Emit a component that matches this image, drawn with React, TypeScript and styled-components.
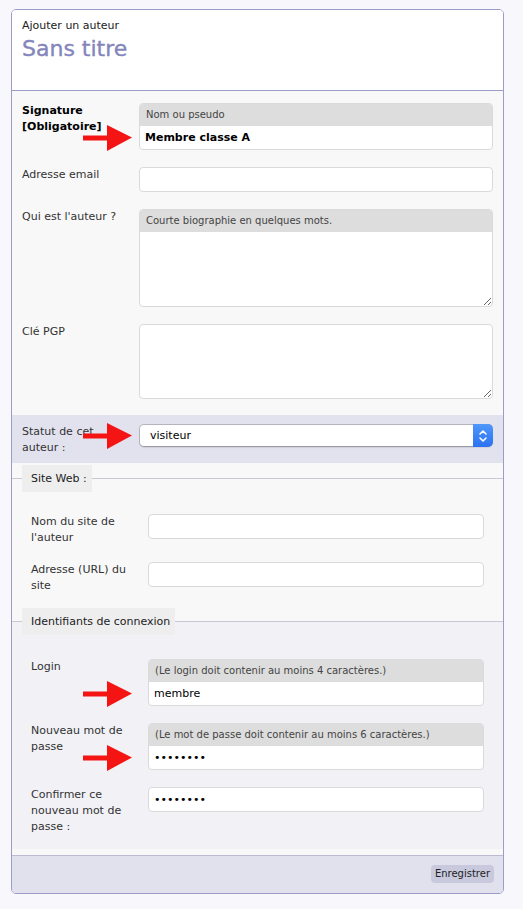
import React from 'react'
import styled, { createGlobalStyle } from 'styled-components'

const GlobalStyle = createGlobalStyle`
    html, body {
        margin: 0;
        padding: 0;
        background: #f8f8fc;
        font-family: 'DejaVu Sans', 'Liberation Sans', sans-serif;
        color: #333;
    }
    * {
        box-sizing: border-box;
    }
`

const Page = styled.div`
    padding: 9px 20px 16px 11px;
`

const Card = styled.form`
    width: 493px;
    border: 1px solid #9c9cc9;
    border-radius: 5px;
    overflow: hidden;
    background: #f8f8f8;
`

const Header = styled.div`
    height: 81px;
    background: #fff;
    border-bottom: 1px solid #9c9cc9;
    padding: 9px 10px;

    .kicker {
        font-size: 11px;
        line-height: 14px;
        color: #222;
        margin: 0;
    }

    h1 {
        font-size: 22px;
        line-height: 26px;
        font-weight: normal;
        color: #8385bb;
        margin: 3px 0 0 0;
        -webkit-text-stroke: 0.35px #8385bb;
    }
`

const Section = styled.div`
    padding: 12px 10px 16px 10px;
`

const Band = styled.div`
    background: #e2e2ee;
    padding: 9px 10px 8px 10px;
    margin-bottom: 2px;
`

const Row = styled.div<{ $last?: boolean }>`
    display: grid;
    grid-template-columns: 117px 1fr;
    align-items: start;
    margin-bottom: ${({ $last }) => ($last ? '0' : '17px')};
`

const Label = styled.label<{ $strong?: boolean }>`
    font-size: 11px;
    line-height: 16px;
    margin-bottom: -1px;
    padding-right: 8px;
    color: ${({ $strong }) => ($strong ? '#000' : '#333')};
    font-weight: ${({ $strong }) => ($strong ? 'bold' : 'normal')};
`

const Field = styled.div`
    position: relative;
    display: flex;
    flex-direction: column;
    border: 1px solid #dadada;
    border-radius: 4px;
    background: #fff;
`

const Hint = styled.div`
    height: 22px;
    background: #dddddd;
    border-radius: 3px 3px 0 0;
    font-size: 10px;
    line-height: 22px;
    padding-left: 6px;
    color: #444;
`

const Input = styled.input<{ $bold?: boolean }>`
    height: 23px;
    border: none;
    outline: none;
    background: transparent;
    border-radius: 3px;
    padding: 0 5px;
    font-family: inherit;
    font-size: 11px;
    font-weight: ${({ $bold }) => ($bold ? 'bold' : 'normal')};
    color: #000;
`

const TextArea = styled.textarea<{ $h: number }>`
    height: ${({ $h }) => $h}px;
    border: none;
    outline: none;
    background: transparent;
    border-radius: 3px;
    padding: 5px;
    font-family: inherit;
    font-size: 11px;
    resize: vertical;
`

const ValueWrap = styled.div`
    position: relative;
    display: flex;
    flex-direction: column;
`

const SelectBox = styled.div`
    position: relative;
    display: flex;
    height: 23px;
    border: 1px solid #b4b4bc;
    border-bottom-color: #9a9aa4;
    border-radius: 5px;
    background: #fff;
    box-shadow: 0 1px 1px rgba(0, 0, 0, 0.08);

    select {
        flex: 1;
        appearance: none;
        border: none;
        outline: none;
        background: transparent;
        padding: 0 10px;
        font-family: inherit;
        font-size: 11px;
        color: #000;
    }
`

const Stepper = styled.span`
    width: 20px;
    margin: -1px -1px -1px 0;
    display: flex;
    align-items: center;
    justify-content: center;
    border-radius: 0 5px 5px 0;
    background: linear-gradient(#4f97fb, #2a72f0);
`

const FieldSet = styled.fieldset<{ $tint?: string }>`
    margin: 0;
    padding: 8px 19px 15px 19px;
    border: none;
    border-top: 1px solid #c9c9d6;
    background: ${({ $tint }) => $tint || 'transparent'};

    legend {
        margin-left: -9px;
        height: 27px;
        padding: 0 5px 0 9px;
        background: #eeeeee;
        font-size: 11px;
        line-height: 27px;
        color: #222;
    }
`

const Spacer = styled.div<{ $h: number }>`
    height: ${({ $h }) => $h}px;
`

const Footer = styled.div`
    display: flex;
    justify-content: flex-end;
    align-items: center;
    height: 38px;
    padding: 0 9px 2px 0;
    margin-top: 6px;
    border-top: 1px solid #bbbbd4;
    background: #e1e1ee;
`

const SaveButton = styled.button`
    height: 18px;
    padding: 0 4px;
    border: none;
    border-radius: 4px;
    background: #c9c9de;
    font-family: inherit;
    font-size: 10px;
    color: #222;
`

const ArrowMark = styled.svg<{ $offset: number }>`
    position: absolute;
    right: calc(100% + ${({ $offset }) => $offset}px);
    top: 50%;
    transform: translateY(-50%);
    pointer-events: none;
`

const RedArrow = ({ offset }: { offset: number }) => (
    <ArrowMark $offset={offset} width="49" height="26" viewBox="0 0 49 26">
        <rect x="0" y="10.5" width="26" height="5" fill="#f41414" />
        <polygon points="24,0 49,12.5 24,26" fill="#f41414" />
    </ArrowMark>
)

const Chevrons = () => (
    <svg width="10" height="14" viewBox="0 0 10 14" fill="none" stroke="#fff" strokeWidth="1.6" strokeLinecap="round" strokeLinejoin="round">
        <polyline points="2,5 5,2 8,5" />
        <polyline points="2,9 5,12 8,9" />
    </svg>
)

const App = () => {
    return (
        <>
            <GlobalStyle />
            <Page>
                <Card onSubmit={(e) => e.preventDefault()}>
                    <Header>
                        <p className="kicker">Ajouter un auteur</p>
                        <h1>Sans titre</h1>
                    </Header>

                    <Section>
                        <Row>
                            <Label $strong>Signature<br />[Obligatoire]</Label>
                            <Field>
                                <Hint>Nom ou pseudo</Hint>
                                <ValueWrap>
                                    <RedArrow offset={8} />
                                    <Input $bold defaultValue="Membre classe A" />
                                </ValueWrap>
                            </Field>
                        </Row>
                        <Row>
                            <Label>Adresse email</Label>
                            <Field>
                                <Input type="email" />
                            </Field>
                        </Row>
                        <Row>
                            <Label>Qui est l'auteur ?</Label>
                            <Field>
                                <Hint>Courte biographie en quelques mots.</Hint>
                                <TextArea $h={74} />
                            </Field>
                        </Row>
                        <Row $last>
                            <Label>Clé PGP</Label>
                            <Field>
                                <TextArea $h={73} />
                            </Field>
                        </Row>
                    </Section>

                    <Band>
                        <Row $last>
                            <Label>Statut de cet<br />auteur :</Label>
                            <SelectBox>
                                <RedArrow offset={8} />
                                <select defaultValue="visiteur">
                                    <option value="visiteur">visiteur</option>
                                </select>
                                <Stepper><Chevrons /></Stepper>
                            </SelectBox>
                        </Row>
                    </Band>

                    <FieldSet>
                        <legend>Site Web :</legend>
                        <Spacer $h={14} />
                        <Row>
                            <Label>Nom du site de<br />l'auteur</Label>
                            <Field>
                                <Input />
                            </Field>
                        </Row>
                        <Row $last>
                            <Label>Adresse (URL) du<br />site</Label>
                            <Field>
                                <Input />
                            </Field>
                        </Row>
                    </FieldSet>

                    <FieldSet $tint="#f1f1f6">
                        <legend>Identifiants de connexion</legend>
                        <Spacer $h={16} />
                        <Row>
                            <Label>Login</Label>
                            <Field>
                                <Hint>(Le login doit contenir au moins 4 caractères.)</Hint>
                                <ValueWrap>
                                    <RedArrow offset={17} />
                                    <Input defaultValue="membre" />
                                </ValueWrap>
                            </Field>
                        </Row>
                        <Row>
                            <Label>Nouveau mot de<br />passe</Label>
                            <Field>
                                <Hint>(Le mot de passe doit contenir au moins 6 caractères.)</Hint>
                                <ValueWrap>
                                    <RedArrow offset={17} />
                                    <Input type="password" defaultValue="membre12" />
                                </ValueWrap>
                            </Field>
                        </Row>
                        <Row $last>
                            <Label>Confirmer ce<br />nouveau mot de<br />passe :</Label>
                            <Field>
                                <Input type="password" defaultValue="membre12" />
                            </Field>
                        </Row>
                    </FieldSet>

                    <Footer>
                        <SaveButton type="submit">Enregistrer</SaveButton>
                    </Footer>
                </Card>
            </Page>
        </>
    )
}

export default App
